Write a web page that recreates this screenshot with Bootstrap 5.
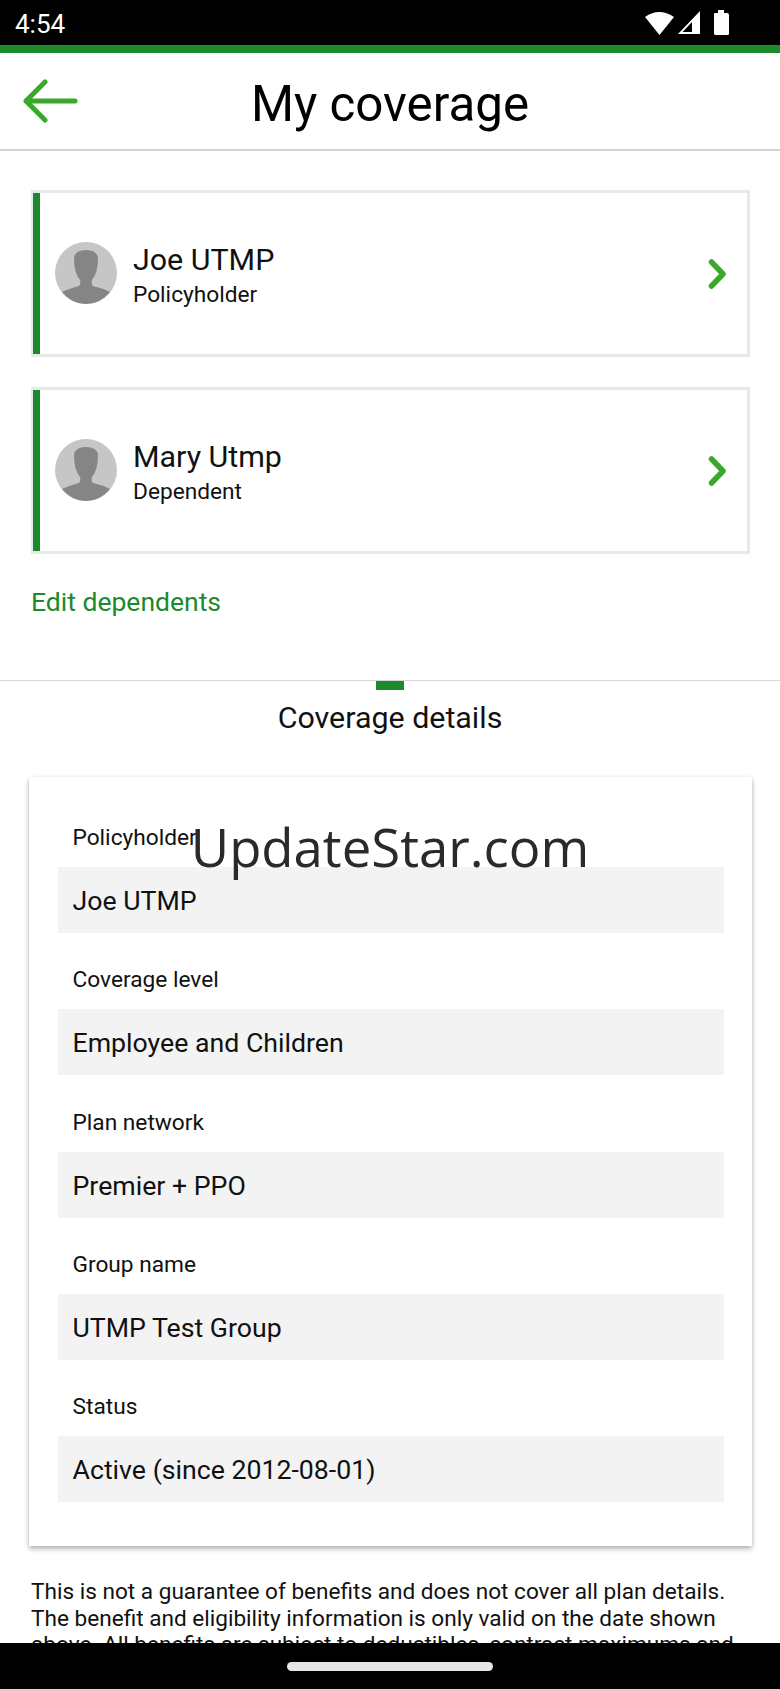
<!DOCTYPE html>
<html lang="en">
<head>
    <meta charset="UTF-8">
    <meta name="viewport" content="width=device-width, initial-scale=1.0">
    <title>My coverage</title>
    <link href="https://cdn.jsdelivr.net/npm/bootstrap@5.3.0/dist/css/bootstrap.min.css" rel="stylesheet">
    <style>
        html, body { height: 1689px; overflow: hidden; }
        body { font-family: Roboto, "Liberation Sans", sans-serif; color: #111; background: #fff; position: relative; }
        .status-strip { height: 45px; background: #000; color: #fff; font-size: 26px; padding: 0 37px 0 15px; }
        .status-time { padding-top: 2px; line-height: 1; }
        .accent-strip { height: 8px; background: #1c8a2c; }
        .app-header { height: 98px; border-bottom: 2px solid #d4d4d4; padding-left: 23px; }
        .app-header svg { flex: none; margin-top: -1px; }
        .app-title { font-size: 49.3px; font-weight: 400; margin: 0 0 0 -78px; flex: 1; text-align: center; line-height: 1; padding-top: 8px; color: #000; }
        .members { padding: 39px 30px 0 31px; }
        .member-item { height: 167px; border: 3px solid #e6e9e9; border-left-width: 2px; padding: 0 20px 0 0; margin-bottom: 30px; background: #fff; }
        .member-bar { width: 7px; align-self: stretch; background: #1c8a2c; margin-right: 15px; }
        .member-avatar { flex: none; margin-top: -2px; }
        .member-name { font-size: 30.4px; line-height: 36px; }
        .member-role { font-size: 22.7px; line-height: 28px; margin-top: 3px; }
        .member-text { margin-left: 16px; margin-top: 3px; }
        .edit-link { color: #1c8a2c; font-size: 26.5px; line-height: 30px; text-decoration: none; padding-top: 3px; display: block; }
        .tab-zone { margin-top: 63px; border-top: 1px solid #d8d8d8; height: 97px; text-align: center; }
        .tab-mark { width: 28px; height: 9px; background: #1c8a2c; margin: 0 auto; }
        .tab-title { font-size: 30.4px; line-height: 34px; margin-top: 11px; }
        .detail-panel { margin: 0 28px 0 29px; height: 769px; padding: 39px 28px 0 29px; border-radius: 0; box-shadow: 0 3px 5px rgba(0,0,0,.28), 0 0 3px rgba(0,0,0,.08); background: #fff; border: 0; }
        .field-label { font-size: 22.7px; line-height: 26px; padding-left: 14.5px; margin-top: 9px; height: 42px; }
        .field-value { height: 66px; background: #f3f3f3; font-size: 26.7px; padding: 2px 0 0 14.5px; margin-bottom: 25.3px; }
        .disclaimer { font-size: 22.6px; line-height: 26.7px; margin: 33px 28px 0 31px; }
        .nav-strip { position: absolute; left: 0; right: 0; bottom: 0; height: 46px; background: #000; }
        .home-pill { width: 206px; height: 9px; border-radius: 5px; background: #e6e6e6; }
        .watermark { position: absolute; left: 0; right: 0; top: 812px; text-align: center; font-family: "Open Sans", "Noto Sans", sans-serif; font-size: 52.7px; line-height: 70px; color: #2a2a2a; }
    </style>
</head>
<body>
    <div class="status-strip d-flex align-items-center justify-content-between">
        <span class="status-time">4:54</span>
        <span class="d-flex align-items-center">
            <svg width="98" height="26" viewBox="0 0 98 26">
                <path d="M0 7 Q14 -3 29 7 L14.500 25 Z" fill="#fff"/>
                <path d="M33 24 L55 24 L55 1 Z M37.500 22 L47 22 L47 12 Z" fill="#fff" fill-rule="evenodd"/>
                <path d="M69 4 Q69 3 70 3 L73 3 L73 0 L79 0 L79 3 L82 3 Q84 3 84 5 L84 24 Q84 25 82 25 L71 25 Q69 25 69 24 Z" fill="#fff"/>
            </svg>
        </span>
    </div>
    <div class="accent-strip"></div>

    <header class="app-header d-flex align-items-center bg-white">
        <svg width="55" height="44" viewBox="0 0 55 44" fill="none" stroke="#3aa82a" stroke-width="5" stroke-linecap="round" stroke-linejoin="round">
            <path d="M22 3 L3 22 L22 41 M3 22 L52 22"/>
        </svg>
        <h1 class="app-title">My coverage</h1>
    </header>

    <section class="members">
        <div class="member-item d-flex align-items-center">
            <div class="member-bar"></div>
            <svg class="member-avatar" width="62" height="62" viewBox="0 0 62 62">
                <circle cx="31" cy="31" r="31" fill="#c6c6c6"/>
                <path d="M7 50 Q16 46 24 44 Q26 42 25 38 Q19 31 19 16 Q20 8 31 8 Q42 8 43 16 Q43 31 37 38 Q36 42 38 44 Q47 46 55 50 Q45 62 31 62 Q17 62 7 50 Z" fill="#858585"/>
            </svg>
            <div class="member-text flex-grow-1">
                <div class="member-name">Joe UTMP</div>
                <div class="member-role">Policyholder</div>
            </div>
            <svg width="20" height="30" viewBox="0 0 20 30" fill="none" stroke="#3aa82a" stroke-width="5.500" stroke-linecap="round" stroke-linejoin="round"><path d="M4.500 3 L16 15 L4.500 27"/></svg>
        </div>
        <div class="member-item d-flex align-items-center">
            <div class="member-bar"></div>
            <svg class="member-avatar" width="62" height="62" viewBox="0 0 62 62">
                <circle cx="31" cy="31" r="31" fill="#c6c6c6"/>
                <path d="M7 50 Q16 46 24 44 Q26 42 25 38 Q19 31 19 16 Q20 8 31 8 Q42 8 43 16 Q43 31 37 38 Q36 42 38 44 Q47 46 55 50 Q45 62 31 62 Q17 62 7 50 Z" fill="#858585"/>
            </svg>
            <div class="member-text flex-grow-1">
                <div class="member-name">Mary Utmp</div>
                <div class="member-role">Dependent</div>
            </div>
            <svg width="20" height="30" viewBox="0 0 20 30" fill="none" stroke="#3aa82a" stroke-width="5.500" stroke-linecap="round" stroke-linejoin="round"><path d="M4.500 3 L16 15 L4.500 27"/></svg>
        </div>
        <a href="#" class="edit-link">Edit dependents</a>
    </section>

    <div class="tab-zone">
        <div class="tab-mark"></div>
        <div class="tab-title">Coverage details</div>
    </div>

    <div class="card detail-panel">
        <div class="field-label">Policyholder</div>
        <div class="field-value d-flex align-items-center">Joe UTMP</div>
        <div class="field-label">Coverage level</div>
        <div class="field-value d-flex align-items-center">Employee and Children</div>
        <div class="field-label">Plan network</div>
        <div class="field-value d-flex align-items-center">Premier + PPO</div>
        <div class="field-label">Group name</div>
        <div class="field-value d-flex align-items-center">UTMP Test Group</div>
        <div class="field-label">Status</div>
        <div class="field-value d-flex align-items-center">Active (since 2012-08-01)</div>
    </div>

    <p class="disclaimer">This is not a guarantee of benefits and does not cover all plan details. The benefit and eligibility information is only valid on the date shown above. All benefits are subject to deductibles, contract maximums and</p>

    <div class="watermark">UpdateStar.com</div>

    <div class="nav-strip d-flex align-items-center justify-content-center">
        <div class="home-pill"></div>
    </div>

    <script src="https://cdn.jsdelivr.net/npm/bootstrap@5.3.0/dist/js/bootstrap.bundle.min.js"></script>
</body>
</html>
